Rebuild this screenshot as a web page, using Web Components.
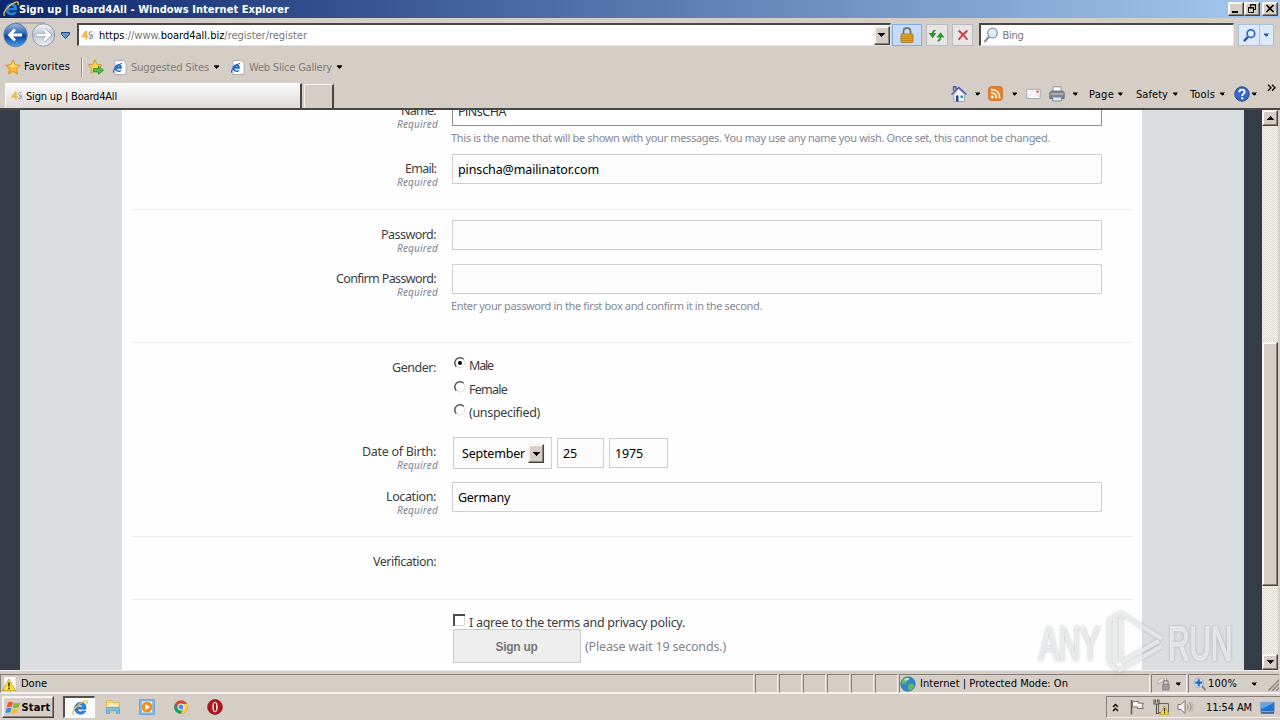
<!DOCTYPE html>
<html lang="en">
<head>
<meta charset="utf-8">
<title>Sign up | Board4All</title>
<style>
    html, body { margin: 0; height: 100%; overflow: hidden; }
    body {
        --face: #d5cec6;
        --dark: #3c3937;
        --shade: #87807a;
        width: 1280px;
        height: 720px;
        display: flex;
        flex-direction: column;
        position: relative;
        background: var(--face);
        font: 11px/14px "DejaVu Sans Condensed", "DejaVu Sans", "Noto Sans", sans-serif;
        font-stretch: condensed;
        color: #000;
    }
</style>
</head>
<body>
<title-bar><fit-text w="270">Sign up | Board4All - Windows Internet Explorer</fit-text></title-bar>
<address-row></address-row>
<favorites-row></favorites-row>
<tab-row><fit-text w="91">Sign up | Board4All</fit-text></tab-row>
<page-view><signup-form></signup-form></page-view>
<status-bar></status-bar>
<task-bar></task-bar>
<water-mark></water-mark>

<script>
// Small helper: attaches an open shadow root with the given markup
class BaseElement extends HTMLElement {
    constructor() {
        super();
        this.attachShadow({ mode: 'open' });
    }
    render(html) {
        this.shadowRoot.innerHTML = html;
    }
}

// <fit-text w="90"> spreads its letters so the line is exactly w pixels wide
class FitText extends BaseElement {
    connectedCallback() {
        this.render(`
            <style>
            :host { display: inline-block; vertical-align: top; flex: none; text-align: left; }
            span { display: inline-block; vertical-align: top; white-space: pre; }
            </style><span><slot></slot></span>`);
        const span = this.shadowRoot.querySelector('span');
        const target = Number(this.getAttribute('w'));
        if (!target) return;
        const count = this.textContent.length;
        const natural = span.getBoundingClientRect().width;
        span.style.letterSpacing = ((target - natural) / count) + 'px';
        this.style.width = target + 'px';
    }
}

const ICONS = {
    ie: `<path d="M2.8 9.3H14C14.5 3.6 11.5 2.2 8.6 2.3 5 2.4 2.6 5 2.6 8.6 2.6 12 5 14.3 8.4 14.3c2.8 0 4.6-1.3 5.3-3.3h-3.4c-2.100 1.900-4.600.4-4.400-1.700zM5.900 6.900c.6-2.400 4.400-2.500 4.800 0z" fill="#2d86dc" stroke="#1859a9" stroke-width=".5"/><path d="M1.500 14.800C-1 11.500 6 3.500 12 1.300c3.500-1.200 4 .8 2.800 3" fill="none" stroke="#efc13c" stroke-width="1.300"/>`,
    iepage: `<path d="M3 .5h9l3 3v12H3z" fill="#fff" stroke="#a9a9b5"/><path d="M3.300 9.200h7.200c.4-3.300-1.300-4.800-3.500-4.800-2.500 0-4.200 1.800-4.200 4.200 0 2.400 1.700 4.100 4.300 4.100 1.600 0 2.700-.7 3.300-1.900H8.100c-1.200.9-2.600.4-2.500-.9zm2.500-1.900c.5-1.400 2-1.300 2.300 0z" fill="#1d68c9"/><path d="M1.800 13.500C.5 11 5.500 5 10.500 3.500" fill="none" stroke="#1d68c9" stroke-width="1.100"/>`,
    star: `<path d="M8 .9l2.200 4.800 5.200.6-3.900 3.500 1.100 5.200L8 12.400 3.400 15l1.100-5.200L.6 6.300l5.200-.6z" fill="#fdb92c" stroke="#d98a16" stroke-width=".8"/><path d="M8 2.800l1.400 3.600 3.800.5L8 8.800 3.500 7l3-.6z" fill="#ffe084"/>`,
    addstar: `<path d="M7 .9l2 4.500 4.900.6-3.700 3.300 1 4.900L7 11.800 2.800 14.200l1-4.900L.2 6l4.800-.6z" fill="#ffd452" stroke="#c99213" stroke-width=".8"/><path d="M5.500 9.500h5V7.200l5 4-5 4v-2.400h-5z" fill="#55c043" stroke="#2b8b20" stroke-width=".8"/>`,
    fav: `<path d="M6.500 2.500L2 9h7M6.500 2.500V13" fill="none" stroke="#efb443" stroke-width="2.200"/><path d="M14 3.500c-5-1-5 3.500-1.500 4.200 3.500.8 1.500 5.300-2.500 3.800M13.500 6c1.500 2-3 3-2.500 5" fill="none" stroke="#8794ad" stroke-width="1.300"/>`,
    lock: `<path d="M4.500 8V4.500c0-4.700 7-4.700 7 0V8" fill="none" stroke="#7d776a" stroke-width="1.800"/><rect x="2" y="7" width="12" height="8.500" rx=".6" fill="#e9a51b" stroke="#9a6910" stroke-width=".7"/><path d="M2.300 9.500h11.400M2.300 11.500h11.400M2.300 13.500h11.400" stroke="#bb7a10" stroke-width=".7"/>`,
    refresh: `<path d="M7 2.500C3.500 2.500 3.500 5 3.800 7M.8 6l3 4 3-4zM9 14c3.500 0 3.600-3 3.300-5M9.300 9.500l3-4 3 4z" fill="#2c962d" stroke="#2c962d" stroke-width="1.100"/>`,
    stop: `<path d="M3 3c4 3 7 6 10 10.500M13 3c-4 3-7 6-10 10.500" fill="none" stroke="#c8414a" stroke-width="2.200"/>`,
    glass: `<path d="M6 9.500L1.500 15" stroke="#888d96" stroke-width="2"/><circle cx="9.500" cy="6" r="4.800" fill="#dfeefa" stroke="#8c98a6" stroke-width="1.300"/>`,
    find: `<path d="M6.500 9.500L2 14" stroke="#1b58c6" stroke-width="2.500"/><circle cx="9.500" cy="6" r="4" fill="#e3f0ff" stroke="#2c6bd6" stroke-width="1.900"/>`,
    home: `<path d="M7.500 2.500l6 6v7H3V8z" fill="#f2f6fb" stroke="#8a99b5" stroke-width=".8"/><path d="M2.500 5V.8h2.300v2.500M.5 8.500L7.800 1.500l7.700 7" fill="none" stroke="#4a5aab" stroke-width="1.400"/><path d="M5 9.500h2.500v6H5z" fill="#26408c"/><path d="M9.500 9.500h2.500v2.500H9.500z" fill="#2f8fc9"/>`,
    rss: `<rect x=".8" y=".8" width="14.400" height="14.400" rx="2.500" fill="#f28428" stroke="#c8621b"/><circle cx="4.500" cy="11.700" r="1.500" fill="#fff"/><path d="M3.200 7.200c3.700 0 5.800 2.100 5.800 5.800M3.200 3.700c5.600 0 9.300 3.700 9.300 9.300" stroke="#fff" stroke-width="1.700" fill="none"/>`,
    mail: `<path d="M.8 3.500h14.400v9.800H.8z" fill="#f8f7fa" stroke="#a8a7ad"/><path d="M1.500 12.500L6 8M15 12.500L10.500 8" stroke="#d5d5dd"/><path d="M11 5h2.500v2H11z" fill="#cf4a46"/>`,
    printer: `<path d="M4 7V.8h8V7" fill="#fff" stroke="#8d949d"/><path d="M.8 6.500l2-1.500h10.400l2 1.500v6H.8z" fill="#85898f" stroke="#5c6167" stroke-width=".8"/><path d="M1.500 8h13" stroke="#c6cbd0"/><path d="M3.500 11h9v4h-9z" fill="#d5e7fb" stroke="#697b90" stroke-width=".8"/>`,
    help: `<circle cx="8" cy="8" r="7.200" fill="#3a68c9" stroke="#24448e"/><path d="M5.200 6.200c.2-3.600 5.800-3.200 5.500-.2-.2 1.800-2.400 1.800-2.500 4M8.200 11.300v1.900" stroke="#fff" stroke-width="1.800" fill="none"/>`,
    warnpage: `<path d="M2 .5h12v15H2z" fill="#fff" stroke="#c5c1bb" stroke-width=".6"/><path d="M7 3l6.500 11.500H.5z" fill="#ffe12e" stroke="#b59413" stroke-width=".7"/><path d="M7 6.500v4M7 11.500v1.700" stroke="#222" stroke-width="1.400"/>`,
    globe: `<circle cx="8" cy="8" r="7.300" fill="#2e86ca" stroke="#28649a" stroke-width=".6"/><path d="M3 3c3-2 6-2 6 0s-2 2-3 4-3 1-4.500 0c0-2 .5-3 1.500-4zM9 8c3-1 5 0 5.500 1.500-1 3-3 5-5 5.200C8 12.500 7 10 9 8z" fill="#63b95b"/><path d="M3.500 4C6 1.200 9 1.500 9.500 3 8 4.500 5.500 5 3.500 4z" fill="#bce7ea"/>`,
    shield: `<path d="M1 8c1-4 5-6 8-5l-1 2 4 1-1-4M2 9l4-2" fill="#eee" stroke="#aaa6a2"/><path d="M8 9V7c0-3 5-3 5 0v2" fill="none" stroke="#87838a" stroke-width="1.300"/><path d="M7 9h7v6H7z" fill="#a09ba1" stroke="#77737a" stroke-width=".7"/>`,
    zoomin: `<path d="M9.500 9.500L14.500 15" stroke="#83837f" stroke-width="2.300"/><circle cx="6.500" cy="6.500" r="5.300" fill="#d5e9fa" stroke="#95a9bd"/><path d="M6.500 2.500v8M2.500 6.500h8" stroke="#246ac6" stroke-width="2.500"/>`,
    windows: `<path d="M2 3c2-1.500 3.500-1.500 5.300-.6L6 7.600C4.300 6.800 2.600 7 .8 8z" fill="#ea5925"/><path d="M8.400 2.800c2.300 1 4.300.8 6.600-.5L13.700 7.500c-2.200 1.300-4.400 1.200-6.500.4z" fill="#83b93b"/><path d="M.5 9.200c2-1.200 3.500-1.200 5.200-.4L4.500 13.700c-1.800-.8-3.500-.5-5 .3z" fill="#368cd6"/><path d="M6.900 9.200c2.200.9 4.300.8 6.500-.4l-1.300 5c-2.200 1.200-4.300 1.200-6.400.4z" fill="#f9bd2f"/>`,
    explorer: `<path d="M1.500 1.500h5l1.500 2h6.500V13h-13z" fill="#f5d675" stroke="#d1ac4c" stroke-width=".7"/><path d="M2.500 4.500h11V8h-11z" fill="#fdf0b6"/><path d="M1.500 14.500V9.800c0-1 .6-1.500 1.500-1.500h10c1 0 1.500.5 1.500 1.500v4.700h-3v-3h-7v3z" fill="#80c1e8" stroke="#4d95c7" stroke-width=".7"/>`,
    player: `<rect x=".8" y=".8" width="14.400" height="14.400" fill="#8ec3ec" stroke="#5998cf"/><rect x="3" y="2.500" width="10" height="11" fill="#d7eafa"/><circle cx="8" cy="8" r="5.300" fill="#f38b1c"/><path d="M6.300 4.900L11.300 8l-5 3.100z" fill="#fff"/>`,
    chrome: `<circle cx="8" cy="8" r="6.800" fill="#dc4437"/><path d="M2.100 4.600A6.800 6.800 0 0 0 7.500 14.800L11 9.700 8 8 5 9.600z" fill="#1da261"/><path d="M7.500 14.800A6.800 6.800 0 0 0 14 5H8l3 4.700z" fill="#ffcd40"/><circle cx="8" cy="8" r="3.100" fill="#4c8bf5" stroke="#fff"/>`,
    opera: `<circle cx="8" cy="8" r="7.400" fill="#b41620" stroke="#830d14" stroke-width=".7"/><ellipse cx="8" cy="8" rx="2.700" ry="5.200" fill="#f1e6e6"/><ellipse cx="8" cy="8" rx="1.100" ry="4.200" fill="#a01019"/>`,
    flag: `<path d="M2.500 1v14.500" stroke="#65625f" stroke-width="1.600"/><path d="M3.500 2.500h6v1.700h5L13 7l1.500 2.500H8.500V8h-5z" fill="#f9f8f7" stroke="#77736f"/>`,
    network: `<path d="M5.500 4.500h10v9h-10z" fill="#cfcac3" stroke="#686562"/><path d="M1 .5v4.500h5V.5M2.500.5v3M4.500.5v3M3.500 5v9.500h3" fill="none" stroke="#54514e" stroke-width="1.100"/><path d="M11.500 6.500l4.300 9H7z" fill="#f8da2a" stroke="#bb9b18" stroke-width=".7"/><path d="M11.500 9v3.500M11.500 13.300v1.300" stroke="#222" stroke-width="1.200"/>`,
    sound: `<path d="M1 5.500h3L8 1.500v13L4 10.500H1z" fill="#f5f4f2" stroke="#7d7975"/><path d="M10 5.500c1.500 1.500 1.500 3.500 0 5M12 3.500c2.700 2.500 2.700 6.500 0 9" stroke="#86827e" fill="none"/><path d="M14 2.500c2.500 3 2.500 8 0 11" stroke="#b5b1ac" fill="none"/>`,
    desktop: `<path d="M.5 2.500h15v10H.5z" fill="#2372cd" stroke="#90abc8"/><path d="M1 3h14L3 9H1z" fill="#5ea5e9"/><path d="M1 13.800h14" stroke="#174987" stroke-width="1.500"/>`
};

// <ui-icon name="star" size="16">
class UiIcon extends BaseElement {
    connectedCallback() {
        const size = this.getAttribute('size') || 16;
        this.render(`
            <style>
            :host { display: block; flex: none; width: ${size}px; height: ${size}px; }
            svg { display: block; width: 100%; height: 100%; overflow: visible; }
            </style>
            <svg viewBox="0 0 16 16">${ICONS[this.getAttribute('name')]}</svg>`);
    }
}

// Little dropdown triangle, dir="up" flips it
class UiArrow extends BaseElement {
    connectedCallback() {
        this.render(`
            <style>
            :host { display: block; flex: none; width: 7px; height: 4px; color: #000; }
            :host([dir=up]) { transform: scaleY(-1); }
            svg { display: block; }
            </style>
            <svg width="7" height="4" shape-rendering="crispEdges"><path d="M0 0h7v1H6v1H5v1H4v1H3V3H2V2H1V1H0z" fill="currentColor"/></svg>`);
    }
}

// Raised classic button face
class RaisedBox extends BaseElement {
    connectedCallback() {
        this.render(`
            <style>
            :host {
                display: flex; flex: none; align-items: center; justify-content: center;
                box-sizing: border-box;
                background: var(--face);
                border: 1px solid; border-color: #f2efeb #46423f #46423f #f2efeb;
                box-shadow: inset -1px -1px #8b847d, inset 1px 1px #fff;
            }
            </style>
            <slot></slot>`);
    }
}

class TitleBar extends BaseElement {
    connectedCallback() {
        this.render(`
            <style>
            :host {
                display: flex; align-items: center; height: 18px; flex: none;
                box-sizing: border-box; padding: 0 2px 0 3px;
                background: linear-gradient(90deg, #0c266b, #a6caf0);
                color: #fff; font-weight: bold;
            }
            .gap { flex: 1; }
            ::slotted(fit-text) { margin-top: 1px; }
            raised-box { width: 16px; height: 14px; }
            .close { margin-left: 2px; }
            svg { display: block; }
            </style>
            <ui-icon name="ie"></ui-icon>
            <slot></slot>
            <div class="gap"></div>
            <raised-box><svg width="10" height="10"><path d="M1 8h6" stroke="#000" stroke-width="2"/></svg></raised-box>
            <raised-box><svg width="10" height="10" fill="none" stroke="#000"><path d="M3.500 3V.5h5v5H6M3 1h6"/><path d="M1.500 3.500h5v5h-5zM1 4h6"/></svg></raised-box>
            <raised-box class="close"><svg width="10" height="10"><path d="M1.500 1l7 7M8.500 1l-7 7" stroke="#000" stroke-width="1.600"/></svg></raised-box>`);
    }
}

class AddressRow extends BaseElement {
    connectedCallback() {
        this.render(`
            <style>
            :host { display: flex; align-items: flex-start; height: 35px; flex: none; box-sizing: border-box; padding: 5px 6px 0 3px; }
            .nav { display: block; flex: none; margin-top: -1px; }
            .nav-arrow { margin: 9px 7px 0 4px; color: #23599a; width: 9px; }
            .box {
                display: flex; align-items: center; box-sizing: border-box; height: 23px;
                background: #fff; border: 2px solid; border-width: 2px 1px 1px 2px;
                border-color: #4a4744 #e7e3de #e7e3de #4a4744; color: #777;
            }
            .box fit-text { margin-top: 2px; }
            .url { width: 815px; padding-left: 2px; }
            .url ui-icon { margin-right: 5px; }
            .url raised-box { width: 16px; height: 19px; margin-left: auto; }
            b { font-weight: normal; color: #000; }
            .btn {
                display: flex; align-items: center; justify-content: center; box-sizing: border-box;
                height: 22px; width: 22px; margin-top: 1px;
                background: #e8e6e5; border: 1px solid #b6bbc4;
            }
            .secure { width: 30px; margin: 1px 4px 0 1px; background: #c6dcfa; border-color: #80aee6; }
            .search { width: 255px; margin-left: 6px; padding-left: 2px; }
            .search ui-icon { margin-right: 3px; }
            .find { width: 22px; margin-left: 4px; background: #dce9fa; border-color: #a9bfdd; }
            .more { width: 14px; border-left: 0; background: #dce9fa; border-color: #a9bfdd; }
            .more ui-arrow { color: #2259a5; transform: scale(.8); }
            </style>
            <svg class="nav" width="54" height="28">
                <defs>
                    <linearGradient id="b" x2="0" y2="1"><stop stop-color="#9dbbe3"/><stop offset=".45" stop-color="#2c62b5"/><stop offset=".55" stop-color="#0c419b"/><stop offset="1" stop-color="#43a8ee"/></linearGradient>
                    <linearGradient id="f" x2="0" y2="1"><stop stop-color="#f4f5f8"/><stop offset=".5" stop-color="#b9c4d6"/><stop offset="1" stop-color="#eff4fb"/></linearGradient>
                </defs>
                <path d="M12 1h30" stroke="#a7a2aa" stroke-width="1.500"/>
                <circle cx="12.500" cy="13" r="11.700" fill="url(#b)" stroke="#607ba5"/>
                <circle cx="40.500" cy="13" r="11.200" fill="url(#f)" stroke="#8e97a8"/>
                <path d="M19 13H7M12 7.500L6.500 13l5.500 5.500" fill="none" stroke="#fff" stroke-width="2.800"/>
                <path d="M34 13h12M41 7.500l5.500 5.500-5.500 5.500" fill="none" stroke="#9ba5b5" stroke-width="4"/>
                <path d="M34 13h12M41 7.500l5.500 5.500-5.500 5.500" fill="none" stroke="#fff" stroke-width="2.600"/>
            </svg>
            <svg class="nav-arrow" width="9" height="7"><path d="M.5.500h8v2l-4 4-4-4z" fill="#5f94cb" stroke="#23497d"/></svg>
            <div class="box url">
                <ui-icon name="fav" size="13"></ui-icon>
                <fit-text w="208"><b>https</b>://www.<b>board4all.biz</b>/register/register</fit-text>
                <raised-box><ui-arrow></ui-arrow></raised-box>
            </div>
            <div class="btn secure"><ui-icon name="lock"></ui-icon></div>
            <div class="btn"><ui-icon name="refresh" size="15"></ui-icon></div>
            <div class="btn" style="margin-left:4px"><ui-icon name="stop" size="14"></ui-icon></div>
            <div class="box search"><ui-icon name="glass"></ui-icon><fit-text w="21">Bing</fit-text></div>
            <div class="btn find"><ui-icon name="find" size="15"></ui-icon></div>
            <div class="btn more"><ui-arrow></ui-arrow></div>`);
    }
}

class FavoritesRow extends BaseElement {
    connectedCallback() {
        this.render(`
            <style>
            :host { display: flex; align-items: center; height: 28px; flex: none; box-sizing: border-box; padding-left: 5px; color: #807b77; }
            .sep { width: 1px; height: 20px; background: #97918b; margin: 0 5px 0 11px; border-right: 1px solid #f0edea; }
            .name { color: #000; }
            ui-arrow { transform: scale(.85); }
            </style>
            <ui-icon name="star"></ui-icon>
            <fit-text class="name" w="46" style="margin-left:3px">Favorites</fit-text>
            <div class="sep"></div>
            <ui-icon name="addstar"></ui-icon>
            <ui-icon name="iepage" style="margin-left:8px" size="15"></ui-icon>
            <fit-text w="78" style="margin:1px 0 0 4px">Suggested Sites</fit-text>
            <ui-arrow style="margin-left:4px"></ui-arrow>
            <ui-icon name="iepage" style="margin-left:10px" size="15"></ui-icon>
            <fit-text w="83" style="margin:1px 0 0 4px">Web Slice Gallery</fit-text>
            <ui-arrow style="margin-left:4px"></ui-arrow>`);
    }
}

class TabRow extends BaseElement {
    connectedCallback() {
        this.render(`
            <style>
            :host { display: flex; align-items: stretch; height: 29px; flex: none; box-sizing: border-box; padding: 2px 0 0 5px; border-bottom: 2px solid #4a4643; }
            .tab {
                display: flex; align-items: center; width: 297px; box-sizing: border-box; padding-left: 5px;
                background: linear-gradient(#fafafa, #dedad6); border: 1px solid #fff; border-right: 2px solid #4a4643; border-bottom: 0;
            }
            .tab ui-icon { margin-right: 3px; }
            ::slotted(fit-text) { margin-top: 1px; }
            .new { width: 27px; margin: 1px 0 0 2px; border: 1px solid #f6f4f2; border-right: 2px solid #4a4643; border-bottom: 0; }
            .tools { display: flex; align-items: center; flex: 1; justify-content: flex-end; padding-right: 3px; margin-top: -4px; }
            .tools fit-text { margin-top: 2px; }
            ui-arrow { transform: scale(.8); }
            .over { align-self: flex-start; margin: 5px 0 0 9px; }
            </style>
            <div class="tab"><ui-icon name="fav" size="12"></ui-icon><slot></slot></div>
            <div class="new"></div>
            <div class="tools">
                <ui-icon name="home"></ui-icon>
                <ui-arrow style="margin:0 7px"></ui-arrow>
                <ui-icon name="rss" size="15"></ui-icon>
                <ui-arrow style="margin:0 8px"></ui-arrow>
                <ui-icon name="mail" size="15"></ui-icon>
                <ui-icon name="printer" style="margin-left:8px"></ui-icon>
                <ui-arrow style="margin:0 10px 0 7px"></ui-arrow>
                <fit-text w="25">Page</fit-text>
                <ui-arrow style="margin:0 12px 0 3px"></ui-arrow>
                <fit-text w="32">Safety</fit-text>
                <ui-arrow style="margin:0 11px 0 4px"></ui-arrow>
                <fit-text w="25">Tools</fit-text>
                <ui-arrow style="margin:0 8px 0 4px"></ui-arrow>
                <ui-icon name="help"></ui-icon>
                <ui-arrow style="margin-left:1px"></ui-arrow>
                <svg class="over" width="10" height="8" fill="none" stroke="#000" stroke-width="1.300"><path d="M1 .8l3 3-3 3M5 .8l3 3-3 3"/></svg>
            </div>`);
    }
}

class PageView extends BaseElement {
    connectedCallback() {
        this.render(`
            <style>
            :host { display: flex; height: 560px; flex: none; overflow: hidden; background: #363c47; }
            .grey { flex: 1; display: flex; justify-content: center; margin: 0 18px 0 20px; background: #dadee1; }
            .sheet { width: 1020px; background: #fefefe; }
            .bar {
                display: flex; flex-direction: column; width: 16px; border-right: 2px solid var(--face);
                background: repeating-conic-gradient(#fff 0 25%, #d9d4cd 0 50%) 0 0 / 2px 2px;
            }
            raised-box { height: 16px; }
            .thumb { height: 244px; margin-top: 216px; }
            .down { margin-top: auto; }
            </style>
            <div class="grey"><div class="sheet"><slot></slot></div></div>
            <div class="bar">
                <raised-box><ui-arrow dir="up"></ui-arrow></raised-box>
                <raised-box class="thumb"></raised-box>
                <raised-box class="down"><ui-arrow></ui-arrow></raised-box>
            </div>`);
    }
}

// One line of the form: label on the left, slotted control on the right
class FormRow extends BaseElement {
    connectedCallback() {
        const label = this.getAttribute('label') || '';
        const hint = this.getAttribute('hint');
        this.render(`
            <style>
            :host { display: flex; flex: none; box-sizing: border-box; }
            .label { width: 318px; flex: none; text-align: right; color: #3f3f42; padding-top: 7px; line-height: 16px; }
            .label fit-text { margin-right: 4px; }
            small { display: block; font-size: 10px; line-height: 12px; margin-top: -1px; font-style: italic; color: #7d8496; margin-right: 2px; }
            .control { margin-left: 12px; width: 650px; }
            .hint { font-size: 11px; line-height: 14px; color: #858997; margin: 5px 0 0 -1px; }
            </style>
            <div class="label">
                ${label ? `<fit-text w="${this.getAttribute('lw')}">${label}</fit-text>` : ''}
                ${this.hasAttribute('required') ? '<small><fit-text w="41" style="margin:0">Required</fit-text></small>' : ''}
            </div>
            <div class="control">
                <slot></slot>
                ${hint ? `<div class="hint"><fit-text w="${this.getAttribute('hw')}">${hint}</fit-text></div>` : ''}
            </div>`);
    }
}

class TextBox extends BaseElement {
    connectedCallback() {
        this.render(`
            <style>
            :host {
                display: flex; align-items: center; height: 30px; box-sizing: border-box; padding: 1px 0 0 5px;
                background: #fcfcfc; border: 1px solid #cfd0d1; color: #000;
            }
            :host([active]) { border-color: #8c8f94; background: #fff; color: #333; }
            </style>
            <slot></slot>`);
    }
}

// Old-style round or square check control
class CheckMark extends BaseElement {
    connectedCallback() {
        const dot = this.hasAttribute('checked') ? '<circle cx="6" cy="6" r="2" fill="#000"/>' : '';
        const radio = `<circle cx="6" cy="6" r="5" fill="#fff" stroke="#dedbd8"/><path d="M2.300 9.700A5.200 5.200 0 0 1 9.700 2.300" fill="none" stroke="#55514e" stroke-width="1.400"/>${dot}`;
        const square = '<path d="M.5.500h11v11H.5z" fill="#fff" stroke="#d5d1cc"/><path d="M1 12V1h11" fill="none" stroke="#4c4947" stroke-width="2"/>';
        this.render(`
            <style>
            :host { display: block; flex: none; width: 12px; height: 12px; }
            svg { display: block; overflow: visible; }
            </style>
            <svg width="12" height="12">${this.getAttribute('type') === 'radio' ? radio : square}</svg>`);
    }
}

class SignupForm extends BaseElement {
    connectedCallback() {
        this.render(`
            <style>
            :host { display: flex; flex-direction: column; margin-top: -14px; font-size: 12.500px; line-height: 16px; font-family: "Noto Sans", sans-serif; color: #3c3c40; }
            hr { flex: none; width: 1001px; height: 1px; margin: 0 0 0 10px; border: 0; background: #ebecec; }
            .option { display: flex; height: 23.500px; padding-left: 1px; }
            .option check-mark { margin: 4px 3px 0 1px; }
            .option fit-text { margin-top: 5px; }
            .date { display: flex; gap: 5px; align-items: center; padding-left: 1px; }
            .month { width: 99px; height: 32px; padding-left: 8px; }
            .month raised-box { width: 16px; height: 19px; margin: 0 7px 0 auto; }
            .agree { display: flex; height: 15px; padding: 0 0 0 1px; }
            .agree fit-text { margin: 1px 0 0 4px; }
            .send { display: flex; align-items: center; color: #83838a; }
            .send > fit-text { margin-top: 1px; }
            .button {
                display: flex; align-items: center; justify-content: center; box-sizing: border-box; width: 128px; height: 34px;
                margin: 0 4px 0 1px; background: #eee; border: 1px solid #cbcccd; color: #777; padding: 1px 1px 0 0;
                font: bold 12px "Liberation Sans", sans-serif;
            }
            </style>
            <form-row style="height:58px" label="Name:" lw="35" required hint="This is the name that will be shown with your messages. You may use any name you wish. Once set, this cannot be changed." hw="599">
                <text-box active><fit-text w="48">PiNsCHA</fit-text></text-box>
            </form-row>
            <form-row style="height:55px" label="Email:" lw="31" required>
                <text-box><fit-text w="141">pinscha@mailinator.com</fit-text></text-box>
            </form-row>
            <hr>
            <form-row style="height:44px;margin-top:10px" label="Password:" lw="55" required>
                <text-box></text-box>
            </form-row>
            <form-row style="height:78px" label="Confirm Password:" lw="100" required hint="Enter your password in the first box and confirm it in the second." hw="311">
                <text-box></text-box>
            </form-row>
            <hr>
            <form-row style="height:84px;margin-top:10px" label="Gender:" lw="44">
                <div class="option"><check-mark type="radio" checked></check-mark><fit-text w="24">Male</fit-text></div>
                <div class="option"><check-mark type="radio"></check-mark><fit-text w="38">Female</fit-text></div>
                <div class="option"><check-mark type="radio"></check-mark><fit-text w="71">(unspecified)</fit-text></div>
            </form-row>
            <form-row style="height:45px" label="Date of Birth:" lw="74" required>
                <div class="date">
                    <text-box class="month"><fit-text w="63">September</fit-text><raised-box><ui-arrow></ui-arrow></raised-box></text-box>
                    <text-box style="width:47px"><fit-text w="14">25</fit-text></text-box>
                    <text-box style="width:59px"><fit-text w="28">1975</fit-text></text-box>
                </div>
            </form-row>
            <form-row style="height:54px" label="Location:" lw="50" required>
                <text-box><fit-text w="52">Germany</fit-text></text-box>
            </form-row>
            <hr>
            <form-row style="height:52px;margin-top:10px" label="Verification:" lw="63"></form-row>
            <hr>
            <form-row style="margin-top:14px">
                <div class="agree"><check-mark></check-mark><fit-text w="216">I agree to the terms and privacy policy.</fit-text></div>
                <div class="send"><div class="button"><fit-text w="42">Sign up</fit-text></div><fit-text w="141">(Please wait 19 seconds.)</fit-text></div>
            </form-row>`);
    }
}

class StatusBar extends BaseElement {
    connectedCallback() {
        this.render(`
            <style>
            :host { display: flex; gap: 1px; height: 23px; flex: none; box-sizing: border-box; padding-top: 3px; border-top: 1px solid #f0eeec; }
            .cell {
                display: flex; align-items: center; box-sizing: border-box; width: 23px; height: 19px;
                border: 1px solid; border-color: var(--shade) #f4f2f0 #f4f2f0 var(--shade);
            }
            ui-arrow { transform: scale(.8); }
            </style>
            <div class="cell" style="width:754px;padding-left:1px"><ui-icon name="warnpage"></ui-icon><fit-text w="26" style="margin-left:3px">Done</fit-text></div>
            <div class="cell"></div><div class="cell"></div><div class="cell"></div>
            <div class="cell"></div><div class="cell"></div><div class="cell"></div>
            <div class="cell" style="width:251px;padding-left:0"><ui-icon name="globe"></ui-icon><fit-text w="148" style="margin-left:4px">Internet | Protected Mode: On</fit-text></div>
            <div class="cell" style="width:36px;padding-left:4px"><ui-icon name="shield" size="15"></ui-icon><ui-arrow style="margin-left:4px"></ui-arrow></div>
            <div class="cell" style="width:91px;padding-left:4px;border-right:0">
                <ui-icon name="zoomin" size="14"></ui-icon><fit-text w="29" style="margin-left:1px">100%</fit-text><ui-arrow style="margin-left:14px"></ui-arrow>
                <svg width="12" height="14" style="margin-left:10px"><path d="M0 14L12 2M4 14l8-8M8 14l4-4" stroke="#8b847d" stroke-width="1.500"/></svg>
            </div>`);
    }
}

class TaskBar extends BaseElement {
    connectedCallback() {
        this.render(`
            <style>
            :host { display: flex; align-items: center; flex: 1; box-sizing: border-box; padding-left: 2px; border-top: 1px solid #f3f0ed; }
            .start { width: 52px; height: 22px; font-weight: bold; }
            .ie {
                display: flex; align-items: center; justify-content: center; box-sizing: border-box; width: 32px; height: 22px; margin-left: 9px;
                background: #fafafa; border: 1px solid; border-width: 2px 1px 1px 2px; border-color: #55504c #fff #fff #55504c;
            }
            .tray {
                display: flex; align-items: center; box-sizing: border-box; width: 174px; height: 22px; margin-left: auto; padding-left: 5px;
                border: 1px solid; border-color: var(--shade) #f4f2f0 #f4f2f0 var(--shade); border-right: 0;
            }
            </style>
            <raised-box class="start"><ui-icon name="windows" size="15"></ui-icon><fit-text w="29" style="margin:1px 0 0 1px">Start</fit-text></raised-box>
            <div class="ie"><ui-icon name="ie"></ui-icon></div>
            <ui-icon name="explorer" style="margin-left:10px"></ui-icon>
            <ui-icon name="player" style="margin-left:18px"></ui-icon>
            <ui-icon name="chrome" style="margin-left:18px"></ui-icon>
            <ui-icon name="opera" style="margin-left:18px"></ui-icon>
            <div class="tray">
                <svg width="7" height="9" fill="none" stroke="#000" stroke-width="1.400"><path d="M1 4l2.500-2.500L6 4M1 8l2.500-2.500L6 8"/></svg>
                <ui-icon name="flag" style="margin-left:10px"></ui-icon>
                <ui-icon name="network" style="margin-left:8px"></ui-icon>
                <ui-icon name="sound" style="margin-left:8px"></ui-icon>
                <fit-text w="46" style="margin:1px 0 0 13px">11:54 AM</fit-text>
                <ui-icon name="desktop" style="margin-left:8px" size="15"></ui-icon>
            </div>`);
    }
}

// Translucent logo laid over the page's lower right corner
class WaterMark extends BaseElement {
    connectedCallback() {
        this.render(`
            <style>
            :host { position: absolute; left: 1036px; top: 606px; width: 200px; height: 68px; pointer-events: none; }
            svg { display: block; filter: drop-shadow(0 0 1.500px rgba(90, 95, 100, .45)); }
            text { font: 48px "Liberation Sans", sans-serif; fill: rgba(238, 239, 240, .75); stroke: rgba(238, 239, 240, .75); stroke-width: 1.500px; }
            </style>
            <svg width="200" height="68">
                <text transform="translate(3 54) scale(.68 1)" textLength="90" lengthAdjust="spacingAndGlyphs">ANY</text>
                <text transform="translate(132 54) scale(.68 1)" textLength="95" lengthAdjust="spacingAndGlyphs">RUN</text>
                <path d="M79 57V13M73 57V14l12-7 41 26M85 7v49M82 65l44-25M73 57l9 7M85 56l38-21" fill="none" stroke="rgba(240,241,242,.75)" stroke-width="4"/>
            </svg>`);
    }
}

customElements.define('ui-icon', UiIcon);
customElements.define('ui-arrow', UiArrow);
customElements.define('raised-box', RaisedBox);
customElements.define('text-box', TextBox);
customElements.define('check-mark', CheckMark);
customElements.define('form-row', FormRow);
customElements.define('title-bar', TitleBar);
customElements.define('address-row', AddressRow);
customElements.define('favorites-row', FavoritesRow);
customElements.define('tab-row', TabRow);
customElements.define('page-view', PageView);
customElements.define('signup-form', SignupForm);
customElements.define('status-bar', StatusBar);
customElements.define('task-bar', TaskBar);
customElements.define('water-mark', WaterMark);
// last, so every text is measured with its final inherited font
customElements.define('fit-text', FitText);
</script>
</body>
</html>
